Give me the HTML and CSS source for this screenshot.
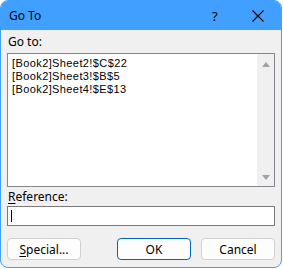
FILE: index.html
```html
<!DOCTYPE html>
<html lang="en">
<head>
    <meta charset="UTF-8">
    <title>Go To</title>
    <link rel="stylesheet" href="styles.css">
</head>
<body>
    <div class="window">
        <div class="titlebar">
            <span class="title">Go To</span>
            <span class="help">?</span>
            <span class="close">
                <svg width="12" height="12" viewBox="0 0 12 12"><path d="M0.5 0.5 L11.5 11.5 M11.5 0.5 L0.5 11.5" stroke="#000" stroke-width="1.1" fill="none"/></svg>
            </span>
        </div>
        <div class="content">
            <div class="label">Go to:</div>
            <div class="listbox">
                <div class="items">
                    <div class="item">[Book2]Sheet2!$C$22</div>
                    <div class="item">[Book2]Sheet3!$B$5</div>
                    <div class="item">[Book2]Sheet4!$E$13</div>
                </div>
                <div class="scrollbar">
                    <span class="arrow up"></span>
                    <span class="arrow down"></span>
                </div>
            </div>
            <div class="label ref-label"><u>R</u>eference:</div>
            <div class="input"><span class="caret"></span></div>
            <div class="buttons">
                <button class="btn"><u>S</u>pecial...</button>
                <div class="right">
                    <button class="btn default">OK</button>
                    <button class="btn">Cancel</button>
                </div>
            </div>
        </div>
    </div>
</body>
</html>
```

FILE: styles.css
```css
body {
    margin: 0;
    background: #fff;
    font-family: "Noto Sans", "Open Sans", sans-serif;
    font-size: 12px;
    color: #000;
}
.window {
    box-sizing: border-box;
    width: 282px;
    height: 268px;
    border: 1px solid #409fff;
    border-radius: 8px;
    background: #f0f0f0;
    overflow: hidden;
}
.titlebar {
    height: 29px;
    background: #409fff;
    display: flex;
    align-items: center;
    padding-left: 8px;
}
.title {
    flex: 1;
    font-size: 12px;
}
.help {
    width: 14px;
    margin-right: 26px;
    font-size: 13px;
}
.close {
    display: flex;
    margin-right: 17px;
}
.content {
    padding: 5px 6px 0 6px;
}
.label {
    height: 18px;
    line-height: 14px;
    padding-left: 1px;
}
.label u {
    text-decoration-thickness: 1px;
    text-underline-offset: 2px;
}
.listbox {
    box-sizing: border-box;
    height: 134px;
    border: 1px solid #828790;
    background: #fff;
    display: flex;
}
.items {
    flex: 1;
    padding: 3px 0 0 4px;
}
.item {
    height: 13px;
    line-height: 13px;
    font-family: "Liberation Sans", Arial, sans-serif;
    font-size: 11px;
    letter-spacing: 0.4px;
}
.scrollbar {
    width: 17px;
    background: #f0f0f0;
    display: flex;
    flex-direction: column;
    justify-content: space-between;
    align-items: center;
    padding: 8px 0 6px;
}
.arrow {
    width: 0;
    height: 0;
    border-left: 4px solid transparent;
    border-right: 4px solid transparent;
}
.arrow.up {
    border-bottom: 5px solid #a3a3a3;
}
.arrow.down {
    border-top: 5px solid #a3a3a3;
}
.ref-label {
    margin-top: 3px;
    height: 16px;
}
.input {
    box-sizing: border-box;
    height: 20px;
    border: 1px solid #7a7a7a;
    background: #fff;
    padding: 3px 0 0 3px;
}
.caret {
    display: block;
    width: 1px;
    height: 12px;
    background: #000;
}
.buttons {
    display: flex;
    justify-content: space-between;
    margin-top: 12px;
}
.right {
    display: flex;
    gap: 10px;
}
.btn {
    box-sizing: border-box;
    width: 74px;
    height: 22px;
    border: 1px solid #d0d0d0;
    border-radius: 4px;
    background: #fdfdfd;
    font-family: inherit;
    font-size: 12px;
    color: #000;
    padding: 0;
}
.btn u {
    text-underline-offset: 2px;
}
.btn.default {
    border-color: #0067c0;
}
```
